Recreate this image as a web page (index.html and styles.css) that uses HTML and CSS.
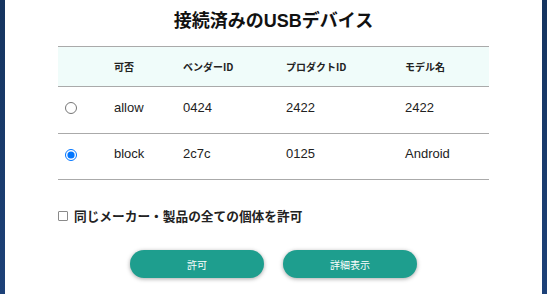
FILE: index.html
```html
<!DOCTYPE html>
<html lang="ja">
<head>
<meta charset="utf-8">
<link rel="stylesheet" href="styles.css">
</head>
<body>
<div class="panel">
  <h1 class="title">接続済みのUSBデバイス</h1>
  <table class="devices">
    <thead>
      <tr>
        <th class="c1"></th>
        <th class="c2">可否</th>
        <th class="c3">ベンダーID</th>
        <th class="c4">プロダクトID</th>
        <th class="c5">モデル名</th>
      </tr>
    </thead>
    <tbody>
      <tr class="row1">
        <td class="c1"><input type="radio" name="dev" class="radio"></td>
        <td>allow</td>
        <td>0424</td>
        <td>2422</td>
        <td>2422</td>
      </tr>
      <tr class="row2">
        <td class="c1"><input type="radio" name="dev" class="radio" checked></td>
        <td>block</td>
        <td>2c7c</td>
        <td>0125</td>
        <td>Android</td>
      </tr>
    </tbody>
  </table>
  <label class="allow-all"><span class="check"></span>同じメーカー・製品の全ての個体を許可</label>
  <div class="actions">
    <button class="btn">許可</button>
    <button class="btn">詳細表示</button>
  </div>
</div>
</body>
</html>
```
FILE: styles.css
```css
html, body {
  margin: 0;
  padding: 0;
  height: 294px;
  overflow: hidden;
}
body {
  background: linear-gradient(180deg, #15345f 0%, #1d4178 100%);
  font-family: "Liberation Sans", "Noto Sans CJK JP", sans-serif;
  color: #111;
}
.panel {
  margin: 0 5px;
  height: 294px;
  background: #fff;
  display: flex;
  flex-direction: column;
  align-items: center;
}
.title {
  margin: 9px 0 0;
  font-size: 18px;
  line-height: 24px;
  font-weight: bold;
  font-family: "Liberation Sans", "Noto Sans CJK JP", sans-serif;
  color: #111;
}
.devices {
  margin-top: 13px;
  width: 431px;
  border-collapse: collapse;
  border-top: 1px solid #aaa;
  table-layout: fixed;
}
.devices th {
  height: 39px;
  padding: 0 0 0 12px;
  background: #f0fcfa;
  border-bottom: 1px solid #aaa;
  text-align: left;
  font-size: 10px;
  font-weight: bold;
  font-family: "Noto Sans CJK JP", "Liberation Sans", sans-serif;
  color: #222;
}
.devices td {
  padding: 0 0 6px 12px;
  border-bottom: 1px solid #aaa;
  font-size: 13px;
  color: #222;
}
.row1 td { height: 40px; }
.row2 td { height: 39px; }
.devices .c1 { width: 32px; padding-left: 7px; }
.devices th.c1 { width: 37px; padding-left: 7px; }
.devices .c2 { width: 57px; }
.devices .c3 { width: 91px; }
.devices .c4 { width: 107px; }
.devices .c5 { width: 84px; }
.radio {
  margin: 2px 0 0;
  width: 12px;
  height: 12px;
  display: block;
}
.allow-all {
  align-self: flex-start;
  margin: 27px 0 0 53px;
  font-size: 12.7px;
  line-height: 18px;
  font-weight: bold;
  font-family: "Noto Sans CJK JP", sans-serif;
  color: #222;
  display: flex;
  align-items: center;
}
.check {
  width: 8px;
  height: 8px;
  border: 1px solid #8a8a8a;
  border-radius: 1px;
  margin: 0 6px 0 0;
  background: #fff;
}
.actions {
  margin-top: 25px;
  display: flex;
  gap: 19px;
}
.btn {
  width: 134px;
  height: 28px;
  border: none;
  border-radius: 14px;
  background: #1e9e8e;
  color: #fff;
  font-size: 10px;
  font-family: "Noto Sans CJK JP", sans-serif;
  box-shadow: 0 1px 4px rgba(0, 0, 0, 0.35);
  padding: 0;
}
```
